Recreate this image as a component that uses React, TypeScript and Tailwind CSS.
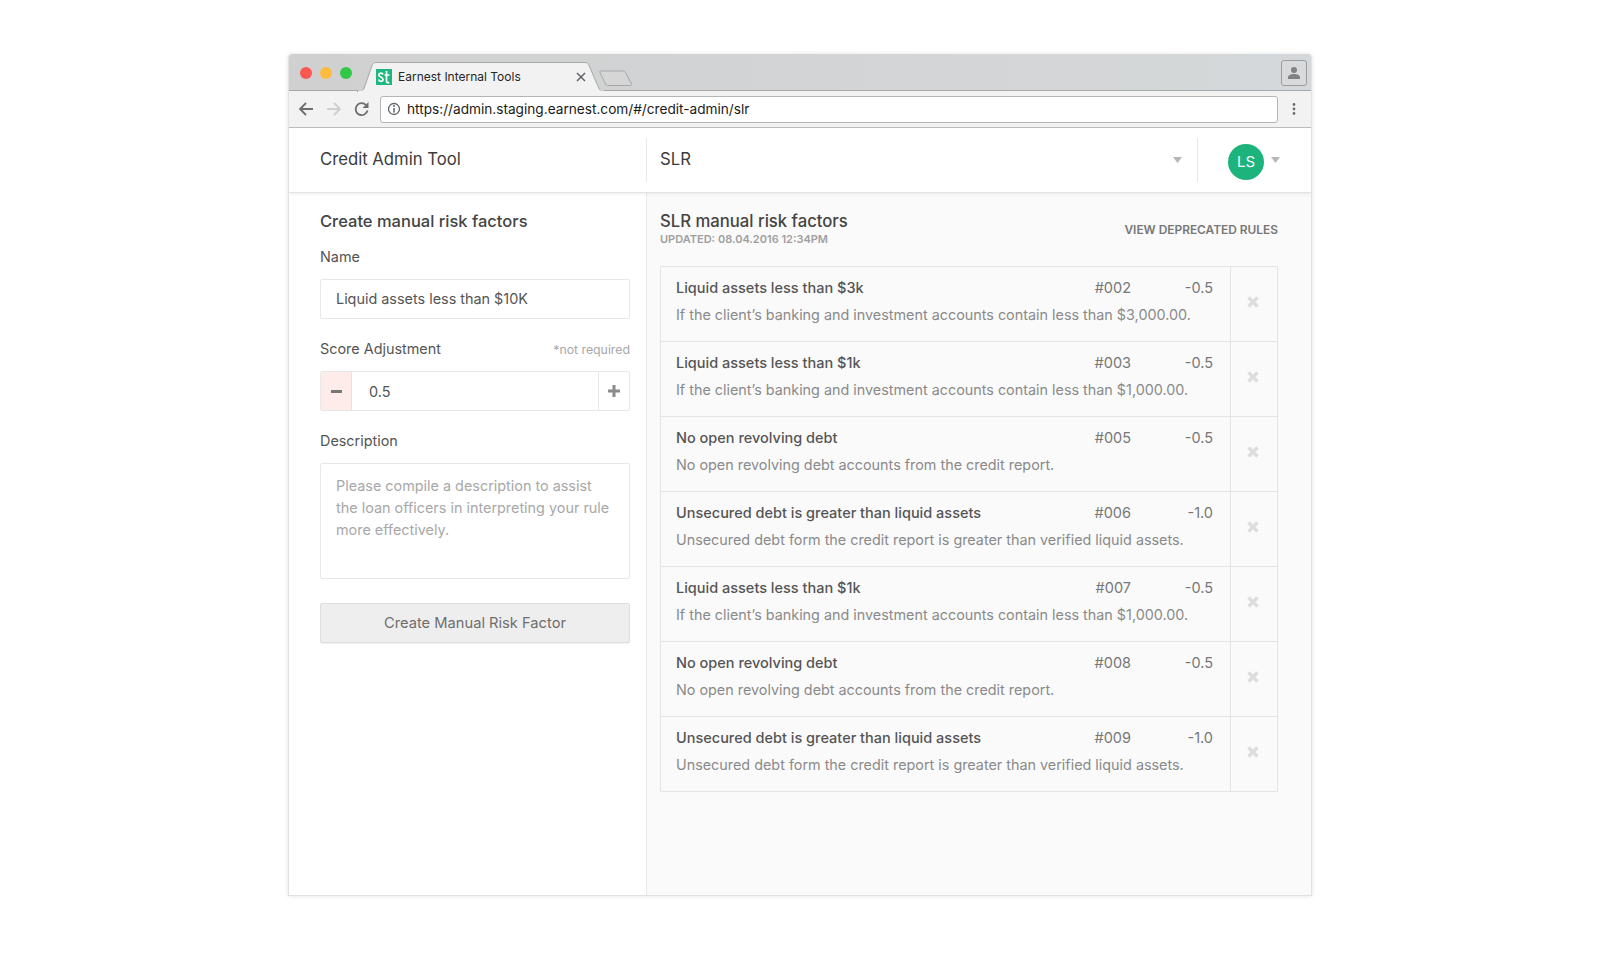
import React from "react";

const rows = [
  ["Liquid assets less than $3k", "#002", "-0.5", "If the client’s banking and investment accounts contain less than $3,000.00."],
  ["Liquid assets less than $1k", "#003", "-0.5", "If the client’s banking and investment accounts contain less than $1,000.00."],
  ["No open revolving debt", "#005", "-0.5", "No open revolving debt accounts from the credit report."],
  ["Unsecured debt is greater than liquid assets", "#006", "-1.0", "Unsecured debt form the credit report is greater than verified liquid assets."],
  ["Liquid assets less than $1k", "#007", "-0.5", "If the client’s banking and investment accounts contain less than $1,000.00."],
  ["No open revolving debt", "#008", "-0.5", "No open revolving debt accounts from the credit report."],
  ["Unsecured debt is greater than liquid assets", "#009", "-1.0", "Unsecured debt form the credit report is greater than verified liquid assets."],
];

function Caret({ className }: { className: string }) {
  return (
    <svg width="9" height="6" viewBox="0 0 9 6" className={className}>
      <path d="M0 0h9L4.5 6z" fill="#b4b7b8" />
    </svg>
  );
}

function Cross() {
  return (
    <svg width="12" height="12" viewBox="0 0 12 12" className="mb-[4px] mr-[2px]">
      <path d="M1.5 1.5l9 9M10.5 1.5l-9 9" stroke="#dddddd" strokeWidth="3.4" />
    </svg>
  );
}

function Tab() {
  return (
    <div className="relative w-[248px] h-[29px] ml-[68px] mt-[8px] shrink-0 -mb-px">
      <svg width="248" height="30" viewBox="0 0 248 30" className="absolute left-0 top-0">
        <path d="M0 29.5h3C5 29.5 6 28.500 7 26.500L15 3.500C16 1.500 17 .5 19 .5h209c2 0 3 1 4 3l10 23c1 2 2 3 5 3" fill="#f2f2f2" stroke="#a5a7a9" />
        <path d="M1 29.500h246" stroke="#f2f2f2" strokeWidth="2" />
      </svg>
      <svg width="16" height="16" viewBox="0 0 16 16" className="absolute left-[19px] top-[7px]">
        <rect width="16" height="16" fill="#1eb77f" />
        <path d="M7 5.500C6.500 3.500 3 3.500 2.800 5.800c-.2 2.400 4.400 2 4.200 4.700C6.800 13 3.200 13 2.500 10.500M10.500 2v10c0 1.500 1 2 2.800 1.500M8.500 6h5" fill="none" stroke="#fff" strokeWidth="1.700" />
      </svg>
      <span className="absolute left-[41px] top-[6px] text-[12px] leading-[18px] text-[#262626]">Earnest Internal Tools</span>
      <svg width="10" height="10" viewBox="0 0 10 10" className="absolute left-[219px] top-[10px]">
        <path d="M1 1l8 8M9 1L1 9" stroke="#5f6368" strokeWidth="1.500" />
      </svg>
    </div>
  );
}

export default function App() {
  return (
    <div className="w-[1600px] h-[960px] bg-white pl-[288px] pt-[54px] font-['Inter',sans-serif] overflow-hidden">
      <div className="w-[1024px] h-[842px] flex flex-col rounded-t-[4px] bg-white border border-t-0 border-[#e2e2e2] shadow-[0_0_4px_rgba(0,0,0,0.12)] overflow-hidden">
        {/* title bar */}
        <div className="h-[37px] shrink-0 flex items-start bg-gradient-to-r from-[#d0d0d0] to-[#d5d8da] border-b border-[#a5a7a9] relative">
          <div className="absolute left-[11px] top-[13px] flex gap-[8px]">
            <span className="w-[12px] h-[12px] rounded-full bg-[#fc5753]" />
            <span className="w-[12px] h-[12px] rounded-full bg-[#fdbc40]" />
            <span className="w-[12px] h-[12px] rounded-full bg-[#33c748]" />
          </div>
          <Tab />
          <svg width="34" height="16" viewBox="0 0 34 16" className="-ml-[6px] mt-[16px] shrink-0">
            <path d="M1.500 1h23c1 0 1.500.5 2 1.500l6 11.500c.3 1-.2 1.500-1 1.500H8.500c-1 0-1.500-.5-2-1.500L1 2.500C.6 1.500.8 1 1.500 1z" fill="#d6d6d6" stroke="#a5a7a9" />
          </svg>
          <div className="ml-auto mr-[4px] mt-[6px] w-[26px] h-[26px] rounded-[3px] border border-[#9a9c9e] bg-[#d8dadc] flex items-center justify-center">
            <svg width="14" height="14" viewBox="0 0 14 14">
              <circle cx="7" cy="4" r="3" fill="#808285" />
              <path d="M1 13v-1.500C1 9 4 8 7 8s6 1 6 3.500V13z" fill="#808285" />
            </svg>
          </div>
        </div>
        {/* toolbar */}
        <div className="h-[37px] shrink-0 flex items-center bg-[#f2f2f2] border-b border-[#bdbdbd]">
          <svg width="16" height="16" viewBox="0 0 16 16" className="ml-[9px]">
            <path d="M15 8H2M8 2L2 8l6 6" fill="none" stroke="#6e6e6e" strokeWidth="1.800" />
          </svg>
          <svg width="16" height="16" viewBox="0 0 16 16" className="ml-[12px]">
            <path d="M1 8h13M8 2l6 6-6 6" fill="none" stroke="#cfcfcf" strokeWidth="1.800" />
          </svg>
          <svg width="16" height="16" viewBox="0 0 16 16" className="ml-[12px]">
            <path d="M13.500 9.500A6 6 0 1 1 12 4" fill="none" stroke="#6e6e6e" strokeWidth="1.800" />
            <path d="M14.500 1v6h-6z" fill="#6e6e6e" />
          </svg>
          <div className="ml-[10px] w-[898px] h-[27px] bg-white border border-[#b5b5b5] rounded-[3px] flex items-center">
            <svg width="14" height="14" viewBox="0 0 14 14" className="ml-[6px]">
              <circle cx="7" cy="7" r="5.500" fill="none" stroke="#5f6368" strokeWidth="1.300" />
              <path d="M7 6v4.500" stroke="#5f6368" strokeWidth="1.500" />
              <circle cx="7" cy="4" r="1" fill="#5f6368" />
            </svg>
            <span className="ml-[6px] text-[13.650px] text-[#1a1a1a]">https://admin.staging.earnest.com/#/credit-admin/slr</span>
          </div>
          <svg width="4" height="14" viewBox="0 0 4 14" className="ml-[14px]">
            <circle cx="2" cy="2.500" r="1.400" fill="#6e6e6e" />
            <circle cx="2" cy="7" r="1.400" fill="#6e6e6e" />
            <circle cx="2" cy="11.500" r="1.400" fill="#6e6e6e" />
          </svg>
        </div>
        {/* app header */}
        <div className="h-[65px] shrink-0 flex items-center bg-white border-b border-[#e4e4e4] shadow-[0_1px_3px_rgba(0,0,0,0.08)] relative z-10">
          <div className="w-[358px] h-[44px] pl-[31px] border-r border-[#e8e8e8] flex items-center text-[16.700px] text-[#3c3c3c]">Credit Admin Tool</div>
          <div className="w-[551px] h-[44px] pl-[13px] pr-[15px] border-r border-[#e8e8e8] flex items-center justify-between text-[16.700px] text-[#3c3c3c]">
            <span>SLR</span>
            <Caret className="" />
          </div>
          <div className="w-[36px] h-[36px] ml-[30px] mt-[4px] rounded-full bg-[#1cb37c] text-white text-[15px] flex items-center justify-center">LS</div>
          <Caret className="ml-[7px]" />
        </div>
        {/* body */}
        <div className="flex-1 flex min-h-0">
          <div className="w-[358px] shrink-0 border-r border-[#e8e8e8] pl-[31px] pr-[16px] pt-[17px]">
            <h2 className="text-[16.500px] leading-[22px] font-[450] text-[#444]">Create manual risk factors</h2>
            <label className="block mt-[15px] text-[14.400px] leading-[20px] text-[#555]">Name</label>
            <div className="mt-[12px] h-[40px] border border-[#e8e8e8] rounded-[2px] pl-[15px] flex items-center text-[14.400px] text-[#555]">Liquid assets less than $10K</div>
            <div className="mt-[20px] flex items-baseline justify-between">
              <span className="text-[14.400px] leading-[20px] text-[#555]">Score Adjustment</span>
              <span className="text-[12.300px] text-[#a8a8a8]">*not required</span>
            </div>
            <div className="mt-[12px] h-[40px] border border-[#e8e8e8] rounded-[2px] flex items-stretch text-[14.400px] text-[#555]">
              <div className="w-[31px] bg-[#fdecea] border-r border-[#f5dcd8] flex items-center justify-center">
                <span className="w-[11px] h-[3px] bg-[#777]" />
              </div>
              <div className="flex-1 pl-[17px] flex items-center">0.5</div>
              <div className="w-[31px] border-l border-[#e8e8e8] flex items-center justify-center">
                <svg width="12" height="12" viewBox="0 0 12 12"><path d="M6 0v12M0 6h12" stroke="#8a8a8a" strokeWidth="3" /></svg>
              </div>
            </div>
            <label className="block mt-[20px] text-[14.400px] leading-[20px] text-[#555]">Description</label>
            <div className="mt-[12px] h-[116px] border border-[#e8e8e8] rounded-[2px] pl-[15px] pr-[17px] pt-[11px] text-[14.400px] leading-[22px] text-[#a8a8a8]">
              Please compile a description to assist the loan officers in interpreting your rule more effectively.
            </div>
            <div className="mt-[24px] h-[40px] border border-[#dedede] rounded-[2px] bg-[#eeeeee] flex items-center justify-center text-[14.700px] text-[#6e6e6e] shadow-[0_1px_1px_rgba(0,0,0,0.06)]">Create Manual Risk Factor</div>
          </div>
          <div className="flex-1 bg-[#fafafa] pl-[13px] pr-[33px] pt-[17px]">
            <div className="flex justify-between">
              <div>
                <h2 className="text-[16.700px] leading-[22px] font-[450] text-[#444]">SLR manual risk factors</h2>
                <div className="text-[11px] leading-[14px] font-semibold text-[#a0a0a0]">UPDATED: 08.04.2016 12:34PM</div>
              </div>
              <span className="mt-[12px] text-[11.900px] leading-[16px] font-semibold text-[#777]">VIEW DEPRECATED RULES</span>
            </div>
            <div className="mt-[20px] border border-[#e4e4e4] rounded-[1px]">
              {rows.map((r, i) => (
                <div key={r[1]} className={`flex ${i ? "border-t border-[#e4e4e4]" : ""} ${i === 0 ? "h-[74px]" : "h-[75px]"}`}>
                  <div className="flex-1 pl-[15px] pr-[17px] pt-[10px]">
                    <div className="flex text-[14.500px] leading-[22px] text-[#555]">
                      <span className="flex-1 font-[450]">{r[0]}</span>
                      <span className="text-[#777]">{r[1]}</span>
                      <span className="w-[82px] text-right text-[#777]">{r[2]}</span>
                    </div>
                    <div className="mt-[5px] text-[14.370px] leading-[22px] text-[#8a8a8a]">{r[3]}</div>
                  </div>
                  <div className="w-[47px] shrink-0 border-l border-[#e4e4e4] flex items-center justify-center">
                    <Cross />
                  </div>
                </div>
              ))}
            </div>
          </div>
        </div>
      </div>
    </div>
  );
}
